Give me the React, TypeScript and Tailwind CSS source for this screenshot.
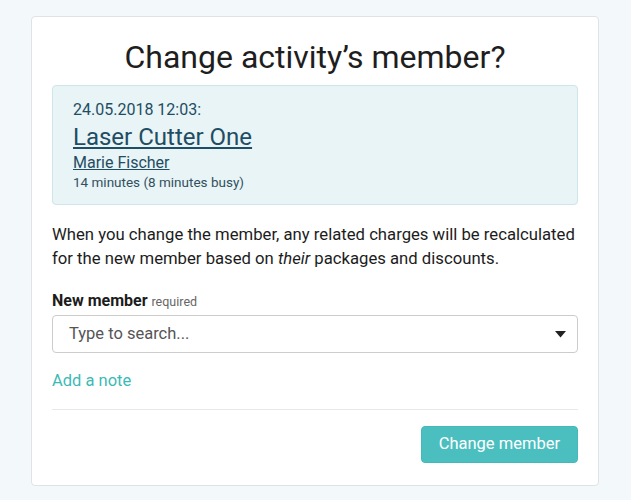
import React from "react";

export default function App() {
  return (
    <div
      className="min-h-[500px] w-full bg-[#f3f8fb] pt-4 pb-4"
      style={{ fontFamily: "Roboto, 'Noto Sans', sans-serif" }}
    >
      <div className="ml-[31px] w-[568px] rounded-[4px] border border-[#dfe3e5] bg-white px-[20px] pt-[18px] pb-[22px]">
        <h1 className="text-center text-[32px] leading-[44px] text-[#1e1e1e]">
          Change activity’s member?
        </h1>
        <div className="mt-[6px] rounded-[4px] border border-[#cfe5ea] bg-[#e8f4f6] px-[20px] pt-[14px] pb-[13px] text-[#1f4d63]">
          <div className="text-[16px] leading-[20px]">24.05.2018 12:03:</div>
          <a href="#" className="block text-[24px] leading-[34px] underline">
            Laser Cutter One
          </a>
          <a href="#" className="block text-[16px] leading-[18px] underline">
            Marie Fischer
          </a>
          <div className="mt-[1px] text-[13.5px] leading-[18px] text-[#33505e]">
            14 minutes (8 minutes busy)
          </div>
        </div>
        <p className="mt-[18px] text-[16.7px] leading-[24px] text-[#1c1c1c]">
          When you change the member, any related charges will be recalculated for the new member
          based on <em>their</em> packages and discounts.
        </p>
        <div className="mt-[20px] text-[16px] leading-[20px] text-[#1c1c1c]">
          <span className="font-bold">New member</span>{" "}
          <span className="text-[12.5px] text-[#666]">required</span>
        </div>
        <div className="mt-[3px] flex h-[38px] items-center justify-between rounded-[4px] border border-[#cccccc] pl-[16px] pr-[11px]">
          <span className="text-[16.5px] text-[#555]">Type to search...</span>
          <svg width="11" height="7" viewBox="0 0 11 7">
            <path d="M0 0h11L5.5 6.5z" fill="#222" />
          </svg>
        </div>
        <a href="#" className="mt-[16px] block text-[16.5px] leading-[24px] text-[#3bbab6]">
          Add a note
        </a>
        <div className="mt-[16px] border-t border-[#e6e8e9]" />
        <div className="mt-[16px] flex justify-end">
          <button className="h-[37px] rounded-[4px] border border-[#45b9ba] bg-[#4bbfc0] px-[17px] text-[16.5px] text-white">
            Change member
          </button>
        </div>
      </div>
    </div>
  );
}
